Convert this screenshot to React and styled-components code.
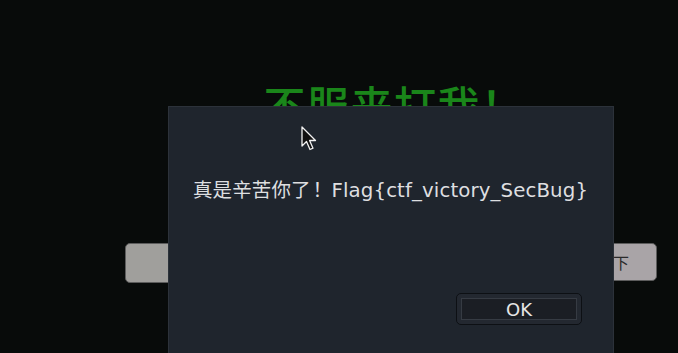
import React from "react";
import styled, { createGlobalStyle } from "styled-components";

//* Global.
const GlobalStyle = createGlobalStyle`
  html, body {
    margin: 0;
    padding: 0;
    background: #080b0a;
    overflow: hidden;
  }
  body {
    font-family: "DejaVu Sans", "Noto Sans CJK SC", sans-serif;
  }
`;

//! Page behind the dialog.
const Page = styled.div`
  width: 532px;
  height: 353px;
  margin-left: 125px;
  padding-top: 83px;
  box-sizing: border-box;
  display: flex;
  flex-direction: column;
  align-items: center;
`;

const Title = styled.h1`
  margin: 0 0 0 6px;
  font-family: "Noto Sans CJK SC", sans-serif;
  font-size: 42px;
  line-height: 42px;
  font-weight: 500;
  color: #1a861a;
  letter-spacing: 1.5px;
`;

const ButtonRow = styled.div`
  width: 100%;
  margin-top: 118px;
  display: flex;
  justify-content: space-between;
`;

const PageButton = styled.button`
  width: ${(p) => p.$w}px;
  height: ${(p) => p.$h}px;
  border: 1px solid #5c5c5c;
  border-radius: 5px;
  background: ${(p) => p.$bg};
  color: #2a2a2a;
  font-family: "Noto Sans CJK SC", sans-serif;
  font-size: 16px;
  padding: 0;
`;

//! Dialog.
const Dialog = styled.div`
  position: fixed;
  left: 168px;
  top: 106px;
  width: 446px;
  height: 270px;
  box-sizing: border-box;
  background: #1f252d;
  border: 1px solid #2c323a;
  padding: 69px 20px 0 24px;
  display: flex;
  flex-direction: column;
`;

const Message = styled.p`
  margin: 0;
  font-size: 19.8px;
  line-height: 26px;
  letter-spacing: 0.1px;
  color: #dedfe0;
  white-space: nowrap;
`;

const Cjk = styled.span`
  font-family: "Noto Sans CJK SC", sans-serif;
  font-size: 19.5px;
`;

const Bang = styled.span`
  font-family: "Noto Sans CJK SC", sans-serif;
  margin: 0 -1px 0 2px;
`;

const Actions = styled.div`
  margin-top: 89px;
  display: flex;
  justify-content: flex-end;
  padding-right: 11px;
`;

const OkButton = styled.button`
  width: 126px;
  height: 32px;
  border: 1px solid #0d1014;
  border-radius: 5px;
  background: #1b1e24;
  box-shadow: inset 0 0 0 4px #232830, inset 0 0 0 5px #363b43;
  color: #e6e6e6;
  font-family: "DejaVu Sans", sans-serif;
  font-size: 18px;
  padding: 0;
`;

//* Mouse pointer drawn over the dialog.
const Pointer = styled.svg`
  position: fixed;
  left: 300px;
  top: 126px;
`;

export default function App() {
  return (
    <>
      <GlobalStyle />
      <Page>
        <Title>不服来打我！</Title>
        <ButtonRow>
          <PageButton $bg="#a09f9c" $h={40} $w={160}>点我一下</PageButton>
          <PageButton $bg="#a9a4a7" $h={38} $w={120}>点我一下</PageButton>
        </ButtonRow>
      </Page>
      <Dialog>
        <Message>
          <Cjk>真是辛苦你了</Cjk>
          <Bang>！</Bang>Flag{"{"}ctf_victory_SecBug{"}"}
        </Message>
        <Actions>
          <OkButton>OK</OkButton>
        </Actions>
      </Dialog>
      <Pointer width="18" height="26" viewBox="0 0 18 26">
        <path
          d="M2 1 L2 20 L6.5 15.5 L10 23.5 L13 22.2 L9.6 14.5 L15.5 14.5 Z"
          fill="#111"
          stroke="#f2f2f2"
          strokeWidth="1.3"
          strokeLinejoin="round"
        />
      </Pointer>
    </>
  );
}
